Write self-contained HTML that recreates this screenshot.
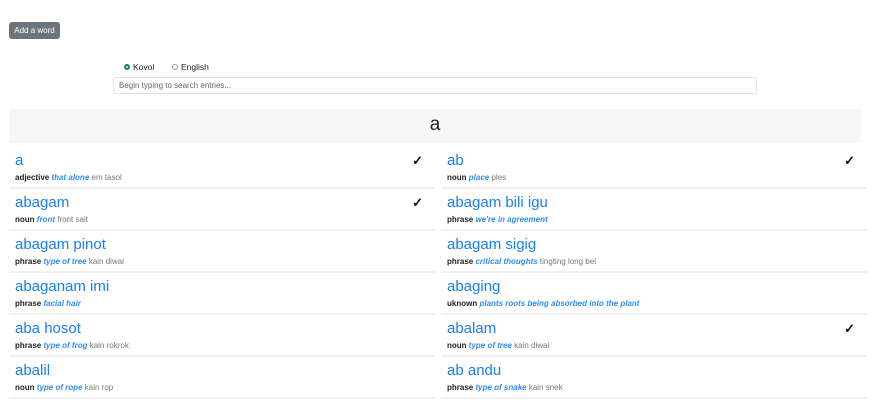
<!DOCTYPE html>
<html><head><style>
body{margin:0;background:#fff;font-family:"Liberation Sans",sans-serif;width:874px;height:400px;overflow:hidden;position:relative}
.btn{position:absolute;left:9px;top:22px;width:51px;height:17px;background:#6c757d;color:#fff;border-radius:3px;font-size:8px;line-height:17px;text-align:center}
.radio{position:absolute;top:62px;font-size:8.5px;color:#222;display:flex;align-items:center}
.radio i{display:inline-block;width:6px;height:6px;border:1px solid #999;border-radius:50%;margin-right:3px;box-sizing:border-box}
.radio i.on{border:2px solid #198754;background:#198754;box-shadow:inset 0 0 0 1px #fff}
.inp{position:absolute;left:113px;top:77px;width:644px;height:17px;border:1px solid #e3e3e3;border-radius:3px;box-sizing:border-box;font-size:8px;color:#666;line-height:15px;padding-left:5px}
.hdr{position:absolute;left:9px;top:109px;width:852px;height:34px;background:#f7f7f8;text-align:center;font-size:19px;line-height:32px;color:#222}
.row{position:absolute;width:426px;height:42px;border-bottom:2px solid #f0f0f0;box-sizing:border-box}
.t{position:absolute;left:6px;top:5px;font-size:15px;color:#1a7ef5}
.s{position:absolute;left:6px;top:26px;font-size:8px;color:#777}
.s b{color:#222}.s em{color:#2f8cf5;font-weight:bold}
.ck{position:absolute;right:12px;top:6px;font-size:13px;font-weight:bold;color:#111}
</style></head><body>
<div class="btn">Add a word</div>
<div class="radio" style="left:124px"><i class="on"></i>Kovol</div>
<div class="radio" style="left:172px"><i></i>English</div>
<div class="inp">Begin typing to search entries...</div>
<div class="hdr">a</div>

<div class="row" style="left:9px;top:147px"><div class="t">a</div><div class="s"><b>adjective</b> <em>that alone</em> em tasol</div><div class="ck">✓</div></div>
<div class="row" style="left:441px;top:147px"><div class="t">ab</div><div class="s"><b>noun</b> <em>place</em> ples</div><div class="ck">✓</div></div>
<div class="row" style="left:9px;top:189px"><div class="t">abagam</div><div class="s"><b>noun</b> <em>front</em> front sait</div><div class="ck">✓</div></div>
<div class="row" style="left:441px;top:189px"><div class="t">abagam bili igu</div><div class="s"><b>phrase</b> <em>we're in agreement</em></div></div>
<div class="row" style="left:9px;top:231px"><div class="t">abagam pinot</div><div class="s"><b>phrase</b> <em>type of tree</em> kain diwai</div></div>
<div class="row" style="left:441px;top:231px"><div class="t">abagam sigig</div><div class="s"><b>phrase</b> <em>critical thoughts</em> tingting long bel</div></div>
<div class="row" style="left:9px;top:273px"><div class="t">abaganam imi</div><div class="s"><b>phrase</b> <em>facial hair</em></div></div>
<div class="row" style="left:441px;top:273px"><div class="t">abaging</div><div class="s"><b>uknown</b> <em>plants roots being absorbed into the plant</em></div></div>
<div class="row" style="left:9px;top:315px"><div class="t">aba hosot</div><div class="s"><b>phrase</b> <em>type of frog</em> kain rokrok</div></div>
<div class="row" style="left:441px;top:315px"><div class="t">abalam</div><div class="s"><b>noun</b> <em>type of tree</em> kain diwai</div><div class="ck">✓</div></div>
<div class="row" style="left:9px;top:357px"><div class="t">abalil</div><div class="s"><b>noun</b> <em>type of rope</em> kain rop</div></div>
<div class="row" style="left:441px;top:357px"><div class="t">ab andu</div><div class="s"><b>phrase</b> <em>type of snake</em> kain snek</div></div>
</body></html>
